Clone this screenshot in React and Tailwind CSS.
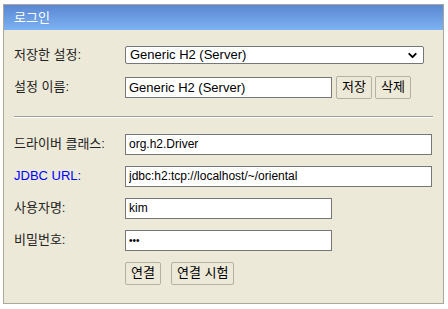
import { ChevronDown } from 'lucide-react'

const FONT = "font-['Liberation_Sans','Noto_Sans_CJK_KR',sans-serif]"
const INPUT = 'h-[21px] border border-[#767676] bg-white px-[3px] text-black outline-none'
const BTN = 'h-[23px] border border-[#b4b1a4] rounded-[2px] bg-[#ece9d8] px-[5px] text-[13px] text-black'

function Row({ label, blue, children }) {
  return (
    <div className="flex items-center">
      <span className={`w-[111px] text-[13px] ${blue ? 'text-[#0000ff]' : 'text-[#222]'}`}>{label}</span>
      {children}
    </div>
  )
}

export default function App() {
  return (
    <div className={`${FONT} pt-[4px] pl-[3px]`}>
      <div className="w-[441px] h-[300px] border border-[#aca899] bg-[#ece9d8]">
        <div className="h-[25px] bg-gradient-to-b from-[#5a86d2] to-[#7cb3f2] pl-[10px] flex items-center text-white text-[13px]">
          로그인
        </div>

        <div className="pt-[15px] px-[10px]">
          <Row label="저장한 설정:">
            <div className="relative w-[299px] h-[18px] border border-[#767676] rounded-[2px] bg-white flex items-center pl-[4px] text-[13px] text-black">
              Generic H2 (Server)
              <ChevronDown className="absolute right-[4px] top-[2px] w-[13px] h-[13px]" strokeWidth={3.5} />
            </div>
          </Row>

          <div className="mt-[11px]">
            <Row label="설정 이름:">
              <input className={`${INPUT} w-[207px] text-[13px]`} defaultValue="Generic H2 (Server)" />
              <button className={`${BTN} ml-[4px]`}>저장</button>
              <button className={`${BTN} ml-[3px]`}>삭제</button>
            </Row>
          </div>

          <div className="mt-[17px] w-[419px] border-t border-[#a0a0a0] border-b border-b-white" />

          <div className="mt-[16px] flex flex-col gap-[11px]">
            <Row label="드라이버 클래스:">
              <input className={`${INPUT} w-[307px] text-[12px]`} defaultValue="org.h2.Driver" />
            </Row>
            <Row label="JDBC URL:" blue>
              <input className={`${INPUT} w-[307px] text-[12px]`} defaultValue="jdbc:h2:tcp://localhost/~/oriental" />
            </Row>
            <Row label="사용자명:">
              <input className={`${INPUT} w-[207px] text-[12px]`} defaultValue="kim" />
            </Row>
            <Row label="비밀번호:">
              <input type="password" className={`${INPUT} w-[207px] text-[10px]`} defaultValue="123" />
            </Row>
            <div className="flex pl-[111px]">
              <button className={BTN}>연결</button>
              <button className={`${BTN} ml-[10px]`}>연결 시험</button>
            </div>
          </div>
        </div>
      </div>
    </div>
  )
}
